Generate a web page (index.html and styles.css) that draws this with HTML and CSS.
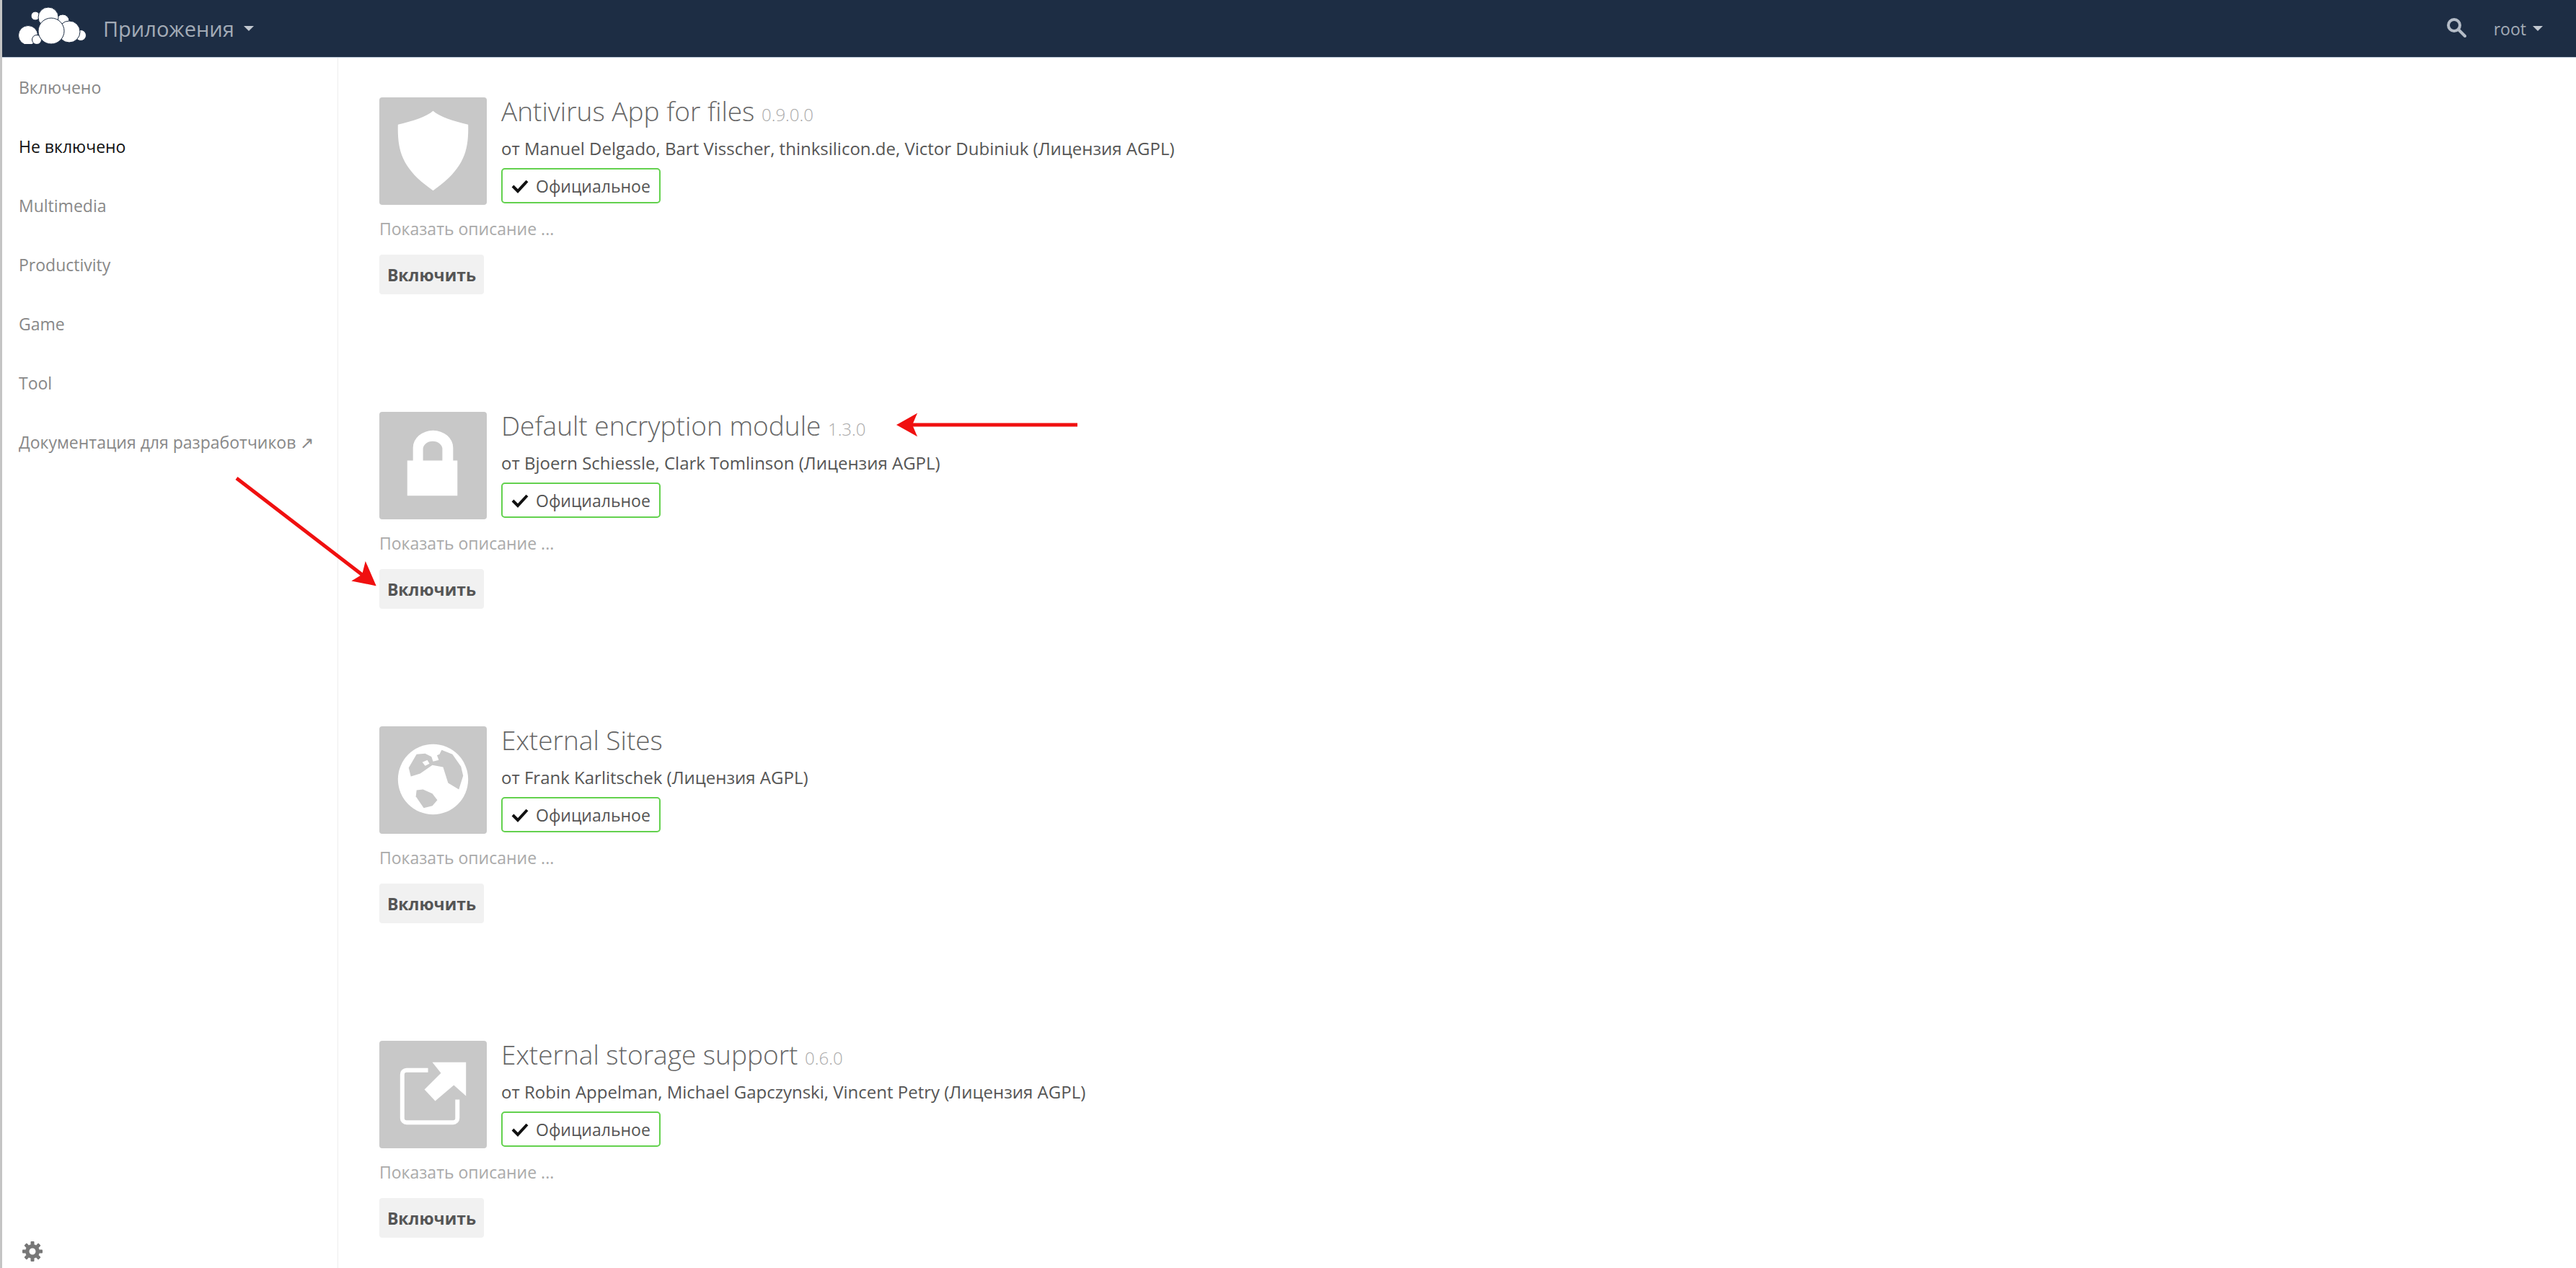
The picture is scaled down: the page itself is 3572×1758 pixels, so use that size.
FILE: index.html
```html
<!DOCTYPE html>
<html lang="ru">
<head>
    <meta charset="UTF-8">
    <meta name="viewport" content="width=device-width, initial-scale=1.0">
    <title>Приложения</title>
    <link rel="stylesheet" href="styles.css">
</head>
<body>

    <header class="topbar">
        <svg class="logo" viewBox="0 0 98 54" aria-label="ownCloud">
            <g fill="#fff" stroke="#1d2d44" stroke-width="1">
                <circle cx="87" cy="42" r="7.5"/>
                <circle cx="24" cy="15" r="6"/>
                <circle cx="62" cy="22" r="9"/>
                <circle cx="14" cy="42" r="13.5"/>
                <circle cx="42" cy="17" r="14"/>
                <circle cx="71" cy="37" r="15"/>
                <circle cx="26" cy="48" r="6.5"/>
                <circle cx="46" cy="36" r="18"/>
            </g>
        </svg>
        <a class="app-menu" href="#">Приложения <span class="caret"></span></a>
        <div class="topbar-right">
            <svg class="search-icon" viewBox="0 0 28 28">
                <circle cx="11" cy="11" r="8" fill="none" stroke="#b4bcc7" stroke-width="4"/>
                <path d="M17 17l9 9" stroke="#b4bcc7" stroke-width="4" stroke-linecap="round"/>
            </svg>
            <a class="user-menu" href="#">root <span class="caret caret-small"></span></a>
        </div>
    </header>

    <div class="layout">
        <nav class="sidebar">
            <a class="nav-item" href="#">Включено</a>
            <a class="nav-item active" href="#">Не включено</a>
            <a class="nav-item" href="#">Multimedia</a>
            <a class="nav-item" href="#">Productivity</a>
            <a class="nav-item" href="#">Game</a>
            <a class="nav-item" href="#">Tool</a>
            <a class="nav-item" href="#">Документация для разработчиков ↗</a>
            <svg class="gear" viewBox="0 0 28 28">
                <g fill="#777">
                    <path d="M14 4a10 10 0 1 0 0 20a10 10 0 0 0 0-20zm0 5.500a4.500 4.500 0 1 1 0 9a4.500 4.500 0 0 1 0-9z" fill-rule="evenodd"/>
                    <rect x="11.500" y="0" width="5" height="5" rx="1"/>
                    <rect x="11.500" y="23" width="5" height="5" rx="1"/>
                    <rect x="0" y="11.500" width="5" height="5" rx="1"/>
                    <rect x="23" y="11.500" width="5" height="5" rx="1"/>
                    <rect x="11.500" y="0" width="5" height="5" rx="1" transform="rotate(45 14 14)"/>
                    <rect x="11.500" y="23" width="5" height="5" rx="1" transform="rotate(45 14 14)"/>
                    <rect x="0" y="11.500" width="5" height="5" rx="1" transform="rotate(45 14 14)"/>
                    <rect x="23" y="11.500" width="5" height="5" rx="1" transform="rotate(45 14 14)"/>
                </g>
            </svg>
        </nav>

        <main class="app-list">
            <section class="app">
                <div class="app-head">
                    <div class="app-icon">
                        <svg viewBox="0 0 150 150">
                            <path d="M75 19C66 27 45 34 26 38C25 75 32 100 75 130C118 100 125 75 124 38C105 34 84 27 75 19z" fill="#fff"/>
                        </svg>
                    </div>
                    <div class="app-meta">
                        <h2 class="app-title">Antivirus App for files <span class="app-version">0.9.0.0</span></h2>
                        <p class="app-author">от Manuel Delgado, Bart Visscher, thinksilicon.de, Victor Dubiniuk (Лицензия AGPL)</p>
                        <span class="badge">
                            <svg class="check" viewBox="0 0 24 20"><path d="M2 10l7 7L22 3" fill="none" stroke="#111" stroke-width="4"/></svg>
                            Официальное
                        </span>
                    </div>
                </div>
                <p class="app-desc">Показать описание ...</p>
                <button class="enable-btn">Включить</button>
            </section>

            <section class="app">
                <div class="app-head">
                    <div class="app-icon">
                        <svg viewBox="0 0 150 150">
                            <path d="M39 68h8V50a28 24 0 0 1 56 0v18h6v49H39zM61 68h27V52a13.500 11 0 0 0-27 0z" fill="#fff" fill-rule="evenodd"/>
                        </svg>
                    </div>
                    <div class="app-meta">
                        <h2 class="app-title">Default encryption module <span class="app-version">1.3.0</span></h2>
                        <p class="app-author">от Bjoern Schiessle, Clark Tomlinson (Лицензия AGPL)</p>
                        <span class="badge">
                            <svg class="check" viewBox="0 0 24 20"><path d="M2 10l7 7L22 3" fill="none" stroke="#111" stroke-width="4"/></svg>
                            Официальное
                        </span>
                    </div>
                </div>
                <p class="app-desc">Показать описание ...</p>
                <button class="enable-btn">Включить</button>
            </section>

            <section class="app">
                <div class="app-head">
                    <div class="app-icon">
                        <svg viewBox="0 0 150 150">
                            <circle cx="75" cy="74" r="49" fill="#fff"/>
                            <path d="M52 39L41 58L44 70L57 66L74 54L89 57L96 79L111 88L117 69L114 56L102 39L87 33L84 39L74 43L64 38z" fill="#c8c8c8"/>
                            <path d="M52 89L51 98L62 114L74 111L81 103L74 94L61 88z" fill="#c8c8c8"/>
                            <path d="M60 50l7-3l3 5l-6 3zM72 40l8-1l3 8l-8 2z" fill="#fff"/>
                        </svg>
                    </div>
                    <div class="app-meta">
                        <h2 class="app-title">External Sites</h2>
                        <p class="app-author">от Frank Karlitschek (Лицензия AGPL)</p>
                        <span class="badge">
                            <svg class="check" viewBox="0 0 24 20"><path d="M2 10l7 7L22 3" fill="none" stroke="#111" stroke-width="4"/></svg>
                            Официальное
                        </span>
                    </div>
                </div>
                <p class="app-desc">Показать описание ...</p>
                <button class="enable-btn">Включить</button>
            </section>

            <section class="app">
                <div class="app-head">
                    <div class="app-icon">
                        <svg viewBox="0 0 150 150">
                            <path d="M68 41H38a6 6 0 0 0-6 6V108a6 6 0 0 0 6 6H103a6 6 0 0 0 6-6V82" fill="none" stroke="#fff" stroke-width="6"/>
                            <path d="M74 30H121V77L104 62L78 84L63 68L86 45z" fill="#fff"/>
                        </svg>
                    </div>
                    <div class="app-meta">
                        <h2 class="app-title">External storage support <span class="app-version">0.6.0</span></h2>
                        <p class="app-author">от Robin Appelman, Michael Gapczynski, Vincent Petry (Лицензия AGPL)</p>
                        <span class="badge">
                            <svg class="check" viewBox="0 0 24 20"><path d="M2 10l7 7L22 3" fill="none" stroke="#111" stroke-width="4"/></svg>
                            Официальное
                        </span>
                    </div>
                </div>
                <p class="app-desc">Показать описание ...</p>
                <button class="enable-btn">Включить</button>
            </section>
        </main>
    </div>

    <!-- красные стрелки поверх скриншота -->
    <svg class="annotations" viewBox="0 0 3572 1758">
        <g stroke="#f01010" fill="#f01010">
            <path d="M1494 589H1262" stroke-width="5"/>
            <path d="M1245 589l25-14l-6 14l6 14z" stroke-width="2"/>
            <path d="M328 663L505 799" stroke-width="5"/>
            <path d="M520 811L490 805L503 797L507 781z" stroke-width="2"/>
        </g>
    </svg>

</body>
</html>
```

FILE: styles.css
```css
* {
    box-sizing: border-box;
}
html, body {
    height: 100%;
    overflow: hidden;
}
body {
    margin: 0;
    font-family: "Open Sans", "Noto Sans", sans-serif;
    font-size: 23px;
    color: #555;
    background-color: #fff;
    border-left: 3px solid #c4c4c4;
    display: flex;
    flex-direction: column;
}
a {
    text-decoration: none;
}

/* верхняя панель */
.topbar {
    height: 80px;
    flex-shrink: 0;
    display: flex;
    align-items: center;
    background-color: #1d2d44;
    border-bottom: 1px solid #b9c6d6;
    padding: 0 46px 0 22px;
}
.logo {
    width: 98px;
    height: 54px;
    margin-top: -11px;
}
.app-menu {
    margin-left: 20px;
    font-size: 29px;
    color: #a3abb6;
    display: flex;
    align-items: center;
}
.caret {
    display: inline-block;
    margin-left: 13px;
    border-left: 7px solid transparent;
    border-right: 7px solid transparent;
    border-top: 7px solid #c2c8d0;
}
.topbar-right {
    margin-left: auto;
    display: flex;
    align-items: center;
}
.search-icon {
    width: 28px;
    height: 28px;
    margin-top: -3px;
}
.user-menu {
    margin-left: 38px;
    font-size: 23px;
    color: #a3abb6;
    display: flex;
    align-items: center;
}
.caret-small {
    margin-left: 9px;
}

.layout {
    flex: 1;
    display: flex;
    min-height: 0;
}

/* левая колонка */
.sidebar {
    width: 466px;
    flex-shrink: 0;
    border-right: 1px solid #eee;
    display: flex;
    flex-direction: column;
}
.nav-item {
    height: 82px;
    line-height: 82px;
    padding-left: 23px;
    color: #888;
    white-space: nowrap;
}
.nav-item.active {
    color: #111;
}
.gear {
    width: 28px;
    height: 28px;
    margin: auto 0 9px 28px;
}

/* список приложений */
.app-list {
    flex: 1;
    padding: 55px 0 0 57px;
    overflow: hidden;
}
.app {
    height: 436px;
}
.app:last-child {
    height: auto;
}
.app-head {
    display: flex;
    gap: 20px;
    height: 149px;
}
.app-icon {
    width: 149px;
    height: 149px;
    background-color: #c8c8c8;
    border-radius: 4px;
}
.app-icon svg {
    display: block;
    width: 149px;
    height: 149px;
}
.app-title {
    margin: 0;
    font-size: 37px;
    font-weight: 300;
    line-height: 38px;
    color: #666;
    white-space: nowrap;
}
.app-version {
    font-size: 24px;
    line-height: 1;
    color: #aaa;
}
.app-author {
    margin: 19px 0 0;
    font-size: 24px;
    line-height: 28px;
    white-space: nowrap;
}
.badge {
    margin-top: 13px;
    width: 221px;
    height: 49px;
    border: 2px solid #63d14e;
    border-radius: 5px;
    display: flex;
    align-items: center;
    gap: 10px;
    padding-left: 12px;
}
.check {
    width: 24px;
    height: 20px;
}
.app-desc {
    margin: 19px 0 0;
    line-height: 28px;
    color: #aaa;
}
.enable-btn {
    display: block;
    margin-top: 22px;
    width: 145px;
    height: 55px;
    padding: 0;
    border: none;
    border-radius: 4px;
    background-color: #f1f1f1;
    color: #555;
    font-family: inherit;
    font-size: 23px;
    font-weight: 700;
}

.annotations {
    position: absolute;
    left: 0;
    top: 0;
    width: 3572px;
    height: 1758px;
    pointer-events: none;
}
```
